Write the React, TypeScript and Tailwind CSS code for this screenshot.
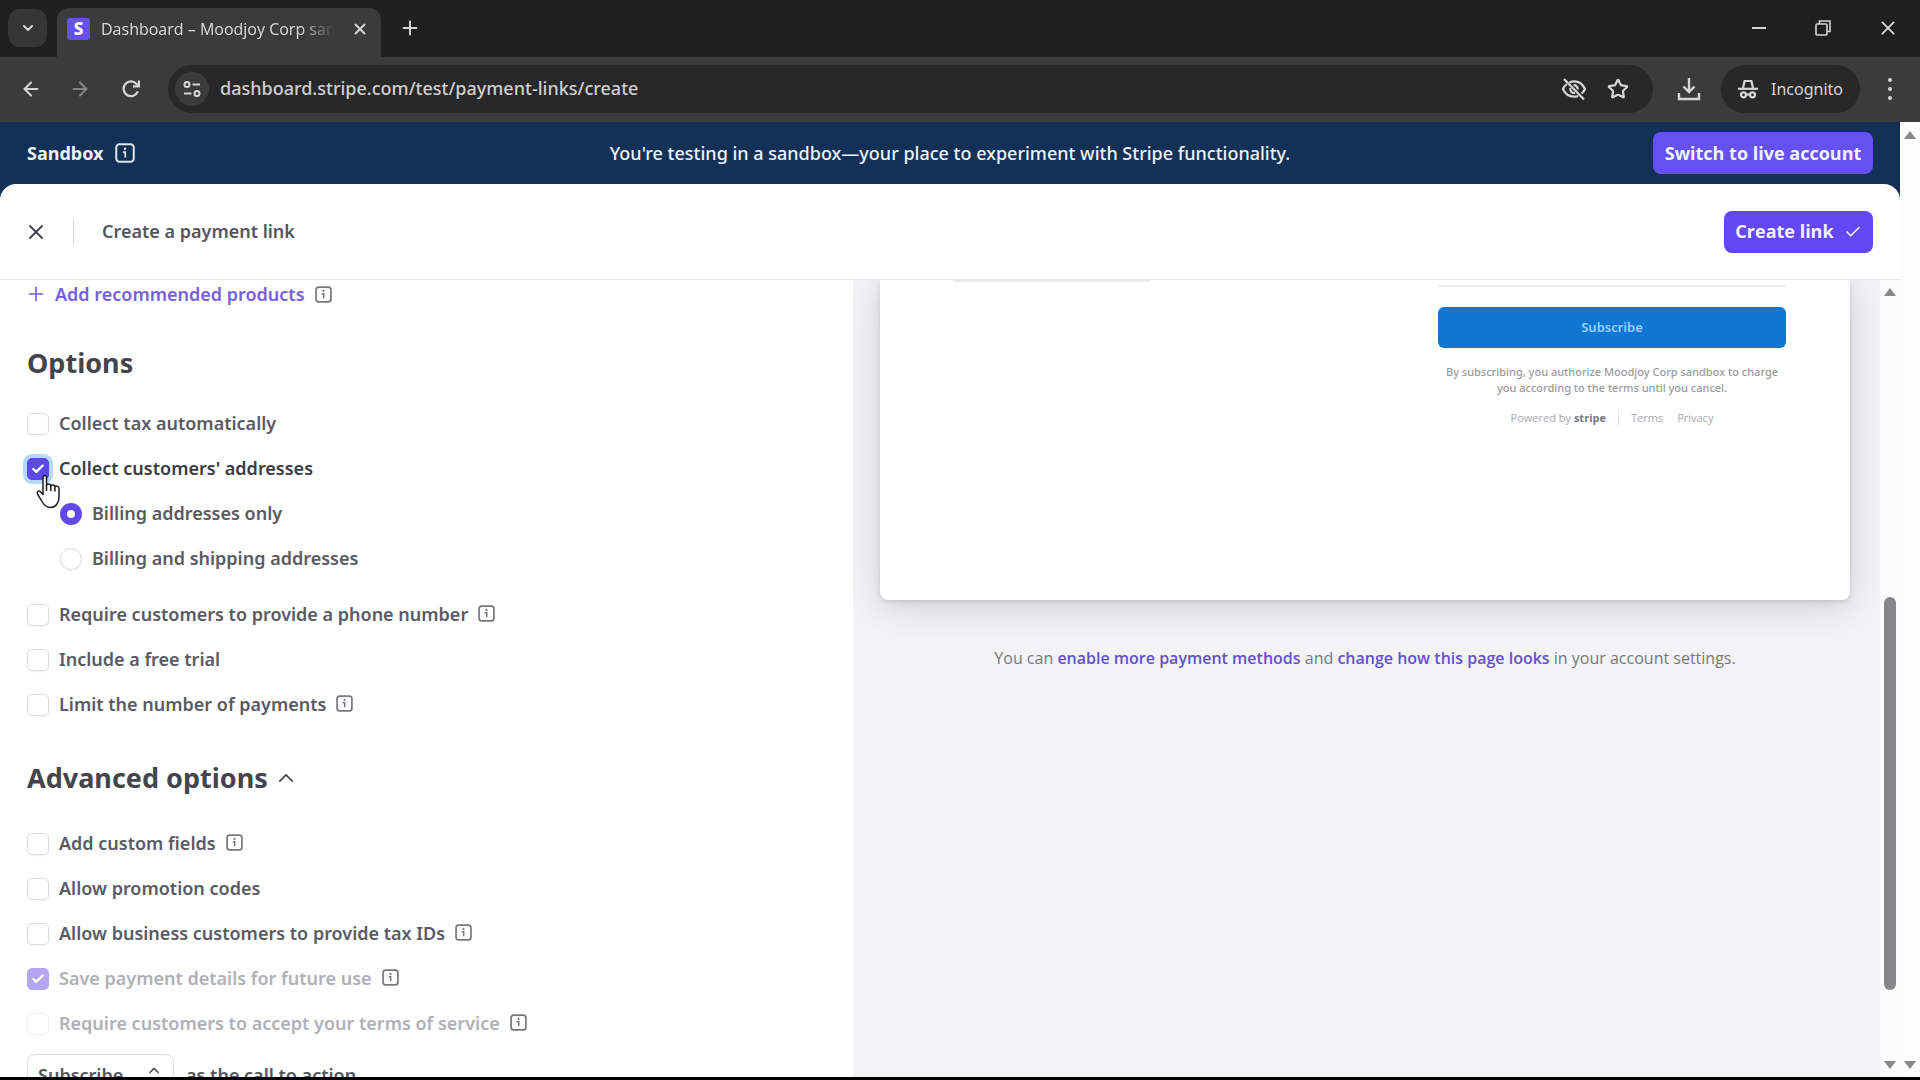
import React from 'react'
import {
  ArrowLeft,
  ArrowRight,
  Check,
  ChevronDown,
  ChevronUp,
  ChevronsUpDown,
  Plus,
  Star,
  X,
} from 'lucide-react'

type OptionProps = {
  id: string
  label: string
  info?: boolean
  checked?: boolean
  disabled?: boolean
  focused?: boolean
}

const InfoIcon: React.FC<{ className?: string }> = ({ className }) => (
  <svg
    viewBox="0 0 16 16"
    fill="none"
    stroke="currentColor"
    strokeWidth={1.6}
    className={className ?? 'size-[17px] text-[#77777d]'}
  >
    <rect x="1" y="1" width="14" height="14" rx="2.5" />
    <path d="M6.3 7.3h1.9v4.2" strokeWidth={1.4} />
    <circle cx="8" cy="4.6" r="1" fill="currentColor" stroke="none" />
  </svg>
)

const TuneIcon = () => (
  <svg
    viewBox="0 0 20 20"
    fill="none"
    stroke="currentColor"
    strokeWidth={2}
    className="size-5"
  >
    <circle cx="5" cy="5.5" r="2.5" />
    <path d="M10.5 5.5H18M2 14.5h7.5" />
    <circle cx="15" cy="14.5" r="2.5" />
  </svg>
)

const ReloadIcon = () => (
  <svg
    viewBox="0 0 20 20"
    fill="none"
    stroke="currentColor"
    strokeWidth={2}
    className="size-[22px]"
  >
    <path d="M16.2 12.2A6.7 6.7 0 1 1 14.8 5.2L17 7.4" />
    <path d="M17.2 2.2v5.4h-5.4" />
  </svg>
)

const EyeOffIcon = () => (
  <svg
    viewBox="0 0 26 24"
    fill="none"
    stroke="currentColor"
    strokeWidth={2.2}
    className="h-6 w-[26px]"
  >
    <path d="M8.5 5.4C9.9 4.7 11.4 4.3 13 4.3c5 0 9 3.2 11 7.7-.8 1.8-1.9 3.3-3.3 4.5M17 18.9c-1.2.5-2.6.8-4 .8-5 0-9-3.2-11-7.700.9-2 2.200-3.700 3.800-5" />
    <path d="M12.5 8.2a4 4 0 0 1 4.3 4.3M9.3 11a4 4 0 0 0 4.7 4.900" />
    <path d="M3 2l20 20.500" />
  </svg>
)

const DownloadIcon = () => (
  <svg
    viewBox="0 0 24 24"
    fill="none"
    stroke="currentColor"
    strokeWidth={2.4}
    className="size-6"
  >
    <path d="M12 1v14M6.5 9.5 12 15l5.5-5.5M2 16v6h20v-6" />
  </svg>
)

const IncognitoIcon = () => (
  <svg
    viewBox="0 0 22 20"
    fill="none"
    stroke="currentColor"
    strokeWidth={2.2}
    className="h-5 w-[22px]"
  >
    <path d="M6 9 7.600 2h6.800L16 9" />
    <path d="M1 9.800h20" />
    <circle cx="6.500" cy="15.800" r="2.500" />
    <circle cx="15.500" cy="15.800" r="2.500" />
    <path d="M9 15.500h4" />
  </svg>
)

const RestoreIcon = () => (
  <svg
    viewBox="0 0 16 16"
    fill="none"
    stroke="currentColor"
    strokeWidth={1.6}
    className="size-4"
  >
    <rect x="1" y="4" width="11" height="11" rx="1" />
    <path d="M4.5 4V1H15v10.5h-3" />
  </svg>
)

const HandCursor = () => (
  <svg
    viewBox="0 0 28 36"
    fill="white"
    stroke="#1b1b1f"
    strokeWidth={1.5}
    strokeLinejoin="round"
    className="pointer-events-none absolute top-7 left-2 z-10 h-9 w-7"
  >
    <path d="M8 3.500C8 .9 11.500 .9 11.500 3.500V11c.4-1.400 4.100-1.300 4.300.7.600-1.300 4-1 4.100 1 .7-1.200 4.100-.8 4.100 1.300v9c0 6-3.400 10.500-8.500 10.500-4.500 0-6.500-2.500-8.500-6l-4.500-7.500c-1.200-2 1.300-3.900 3-2.300L8 20.500V3.500Z" />
    <path d="M11.500 11v6M15.800 11.700V17M19.900 12.700V17.500" fill="none" />
  </svg>
)

const Arrow: React.FC<{ down?: boolean }> = ({ down }) => (
  <svg viewBox="0 0 12 8" fill="#87878a" className="h-2 w-3">
    <path d={down ? 'M0 0h12L6 8Z' : 'M6 0l6 8H0Z'} />
  </svg>
)

const CheckOption: React.FC<OptionProps> = ({
  id,
  label,
  info,
  checked,
  disabled,
  focused,
}) => {
  const tone = disabled
    ? 'text-[#b0b0b8]'
    : focused
      ? 'text-[#3b3b43]'
      : 'text-[#5a5a63]'

  return (
    <li className="relative flex h-[45px] items-center">
      <span className="grid size-[22px] shrink-0 place-items-center">
        <input
          id={id}
          type="checkbox"
          defaultChecked={checked}
          disabled={disabled}
          className={`col-start-1 row-start-1 size-[22px] appearance-none rounded-[5px] border border-[#dcdce2] bg-white shadow-xs checked:border-[#5f48e8] checked:bg-[#5f48e8] disabled:border-[#f0f0f3] disabled:shadow-none disabled:checked:border-[#b3a5f3] disabled:checked:bg-[#b3a5f3] ${focused ? 'ring-4 ring-[#b4dafb]' : ''}`}
        />
        {checked && (
          <Check
            strokeWidth={4}
            className="pointer-events-none col-start-1 row-start-1 size-[14px] text-white"
          />
        )}
      </span>
      <label htmlFor={id} className={`ml-[10px] font-semibold ${tone}`}>
        {label}
      </label>
      {info && (
        <button type="button" aria-label={`About: ${label}`} className="ml-[10px] pb-[2px]">
          <InfoIcon />
        </button>
      )}
      {focused && <HandCursor />}
    </li>
  )
}

const RadioOption: React.FC<{ id: string; label: string; checked?: boolean }> = ({
  id,
  label,
  checked,
}) => (
  <li className="flex h-[45px] items-center pl-[33px]">
    <input
      id={id}
      type="radio"
      name="address"
      defaultChecked={checked}
      className="size-[22px] appearance-none rounded-full border border-[#dcdce2] bg-white shadow-xs checked:border-[7px] checked:border-[#6247ea]"
    />
    <label htmlFor={id} className="ml-[10px] font-semibold text-[#5a5a63]">
      {label}
    </label>
  </li>
)

const TabStrip = () => (
  <div className="flex h-[57px] items-end justify-between bg-[#202020]">
    <div className="flex items-end">
      <button
        type="button"
        aria-label="Search tabs"
        className="mb-[10px] ml-2 grid h-[38px] w-[39px] place-items-center rounded-xl bg-[#363636]"
      >
        <ChevronDown className="size-4" strokeWidth={3} />
      </button>
      <div className="ml-[10px] flex h-[49px] w-[324px] items-center rounded-t-xl bg-[#3b3b3b] pr-3 pb-2 pl-[10px]">
        <span className="grid h-[22px] w-[23px] shrink-0 place-items-center rounded-[3px] bg-[#6651f0] text-[17px] leading-none font-extrabold text-white">
          S
        </span>
        <span className="ml-[11px] min-w-0 flex-1 overflow-hidden mask-r-from-85% font-['Open_Sans',sans-serif] text-[16px] whitespace-nowrap text-[#dcdcdc]">
          Dashboard – Moodjoy Corp sandbox
        </span>
        <button type="button" aria-label="Close tab" className="ml-4">
          <X className="size-[18px]" strokeWidth={2.5} />
        </button>
      </div>
      <button type="button" aria-label="New tab" className="mb-[18px] ml-[18px]">
        <Plus className="size-[22px]" strokeWidth={2.2} />
      </button>
    </div>
    <div className="mb-5 flex items-center gap-12 pr-[23px]">
      <button type="button" aria-label="Minimize" className="grid h-4 w-4 place-items-center">
        <span className="h-[2px] w-[14px] bg-current" />
      </button>
      <button type="button" aria-label="Restore">
        <RestoreIcon />
      </button>
      <button type="button" aria-label="Close">
        <X className="size-[18px] scale-125" strokeWidth={2} />
      </button>
    </div>
  </div>
)

const Toolbar = () => (
  <div className="flex h-[65px] items-center bg-[#3b3b3b] pr-5 pb-[2px] pl-5">
    <button type="button" aria-label="Back">
      <ArrowLeft className="size-[22px]" strokeWidth={2.2} />
    </button>
    <button type="button" aria-label="Forward" className="ml-[27px] text-[#858585]">
      <ArrowRight className="size-[22px]" strokeWidth={2.2} />
    </button>
    <button type="button" aria-label="Reload" className="ml-[29px]">
      <ReloadIcon />
    </button>
    <div className="ml-[26px] flex h-12 flex-1 items-center rounded-full bg-[#282828] pr-6 pl-[7px]">
      <button
        type="button"
        aria-label="Site information"
        className="grid size-[34px] place-items-center rounded-full bg-[#3b3b3b]"
      >
        <TuneIcon />
      </button>
      <input
        aria-label="Address"
        defaultValue="dashboard.stripe.com/test/payment-links/create"
        className="ml-[11px] min-w-0 flex-1 bg-transparent text-[18px] font-medium text-[#d0d0d0] outline-none"
      />
      <button type="button" aria-label="Third-party cookies blocked">
        <EyeOffIcon />
      </button>
      <button type="button" aria-label="Bookmark" className="ml-5">
        <Star className="size-[22px]" strokeWidth={2.4} />
      </button>
    </div>
    <button type="button" aria-label="Downloads" className="ml-6">
      <DownloadIcon />
    </button>
    <button
      type="button"
      className="ml-5 flex h-12 w-[139px] items-center gap-3 rounded-full bg-[#282828] pl-4 text-[16px]"
    >
      <IncognitoIcon />
      Incognito
    </button>
    <button type="button" aria-label="Menu" className="ml-5 grid w-5 justify-items-center gap-[5px]">
      <span className="size-1 rounded-full bg-current" />
      <span className="size-1 rounded-full bg-current" />
      <span className="size-1 rounded-full bg-current" />
    </button>
  </div>
)

const SandboxBanner = () => (
  <div className="grid h-[62px] shrink-0 grid-cols-[1fr_auto_1fr] items-center bg-[#133157] px-[27px] text-[18px] text-[#eef3fa]">
    <div className="flex items-center gap-3 font-bold">
      Sandbox
      <InfoIcon className="size-5 text-[#dbe6f2]" />
    </div>
    <p className="font-medium">
      You're testing in a sandbox—your place to experiment with Stripe functionality.
    </p>
    <button
      type="button"
      className="h-[42px] w-[220px] justify-self-end rounded-lg bg-[#6750f2] font-['Open_Sans',sans-serif] font-bold whitespace-nowrap"
    >
      Switch to live account
    </button>
  </div>
)

const PanelHeader = () => (
  <header className="flex h-24 shrink-0 items-center border-b border-[#e6e6ea] pr-[27px] pl-6">
    <button type="button" aria-label="Close" className="text-[#3f3f46]">
      <X className="size-6" strokeWidth={1.8} />
    </button>
    <span className="ml-[25px] h-6 w-px bg-[#d5d5db]" />
    <h1 className="ml-7 flex-1 text-[18px] font-semibold text-[#55555e]">
      Create a payment link
    </h1>
    <button
      type="button"
      className="flex h-[42px] w-[149px] items-center justify-center gap-[10px] rounded-lg bg-[#6447f4] font-['Open_Sans',sans-serif] text-[18px] font-bold text-[#f3f1ff]"
    >
      Create link
      <Check className="size-[18px]" strokeWidth={2.2} />
    </button>
  </header>
)

const Settings = () => (
  <section className="min-h-0 w-[853px] shrink-0 overflow-hidden pl-[27px] text-[18px]">
    <div className="flex h-7 items-center">
      <button type="button" className="flex items-center gap-[10px] font-semibold text-[#7760dc]">
        <Plus className="size-[18px] scale-125" strokeWidth={1.8} />
        Add recommended products
      </button>
      <button type="button" aria-label="About recommended products" className="ml-[10px]">
        <InfoIcon />
      </button>
    </div>

    <h2 className="mt-[39px] text-[27px] leading-8 font-bold text-[#44444c]">Options</h2>
    <ul className="mt-[22px]">
      <CheckOption id="tax" label="Collect tax automatically" />
      <CheckOption id="addresses" label="Collect customers' addresses" checked focused />
      <RadioOption id="billing" label="Billing addresses only" checked />
      <RadioOption id="shipping" label="Billing and shipping addresses" />
    </ul>
    <ul className="mt-[11px]">
      <CheckOption id="phone" label="Require customers to provide a phone number" info />
      <CheckOption id="trial" label="Include a free trial" />
      <CheckOption id="limit" label="Limit the number of payments" info />
    </ul>

    <h2 className="mt-[35px] text-[27px] leading-8 font-bold text-[#44444c]">
      <button type="button" className="flex items-center gap-2">
        Advanced options
        <ChevronUp className="size-5 scale-125" strokeWidth={1.6} />
      </button>
    </h2>
    <ul className="mt-[27px]">
      <CheckOption id="fields" label="Add custom fields" info />
      <CheckOption id="promo" label="Allow promotion codes" />
      <CheckOption id="taxids" label="Allow business customers to provide tax IDs" info />
      <CheckOption id="save" label="Save payment details for future use" info checked disabled />
      <CheckOption
        id="terms"
        label="Require customers to accept your terms of service"
        info
        disabled
      />
    </ul>

    <div className="mt-2 flex items-center gap-3 font-semibold text-[#55555e]">
      <span className="grid items-center">
        <select
          id="cta"
          className="col-start-1 row-start-1 h-[42px] w-[147px] appearance-none rounded-lg border border-[#dcdce2] bg-white pl-[10px]"
        >
          <option>Subscribe</option>
        </select>
        <ChevronsUpDown className="pointer-events-none col-start-1 row-start-1 mr-[10px] size-5 justify-self-end" />
      </span>
      <label htmlFor="cta">as the call to action</label>
    </div>
  </section>
)

const Preview = () => (
  <section className="min-w-0 flex-1 overflow-hidden bg-[#f4f4f7] pr-[30px] pl-[27px]">
    <div className="grid h-80 grid-cols-2 rounded-b-lg bg-white shadow-[0_6px_36px_rgba(60,60,90,0.22),0_2px_5px_rgba(60,60,90,0.16)]">
      <div className="pl-[73px]">
        <div className="h-[2px] w-[197px] bg-[#ececef]" />
      </div>
      <div className="pr-16 pl-[73px] text-center">
        <div className="h-[7px] border-b-2 border-[#ebedef]" />
        <button
          type="button"
          className="mt-5 h-[41px] w-full rounded-md bg-[#0f76d1] text-[13px] font-semibold text-[#9fd0f6]"
        >
          Subscribe
        </button>
        <p className="mt-4 px-1 text-[11px] leading-4 font-medium text-[#9a9a9e]">
          By subscribing, you authorize Moodjoy Corp sandbox to charge you according to the
          terms until you cancel.
        </p>
        <div className="mt-[14px] flex items-center justify-center font-['Open_Sans',sans-serif] text-[11px] leading-4 text-[#a8a8ad]">
          <span>
            Powered by <b className="text-[#77777c]">stripe</b>
          </span>
          <span className="mx-3 h-4 w-px bg-[#e4e4e8]" />
          <a href="#terms">Terms</a>
          <a href="#privacy" className="ml-[14px]">
            Privacy
          </a>
        </div>
      </div>
    </div>
    <p className="mt-[46px] text-center font-['Open_Sans',sans-serif] text-[16px] leading-6 text-[#77777f]">
      You can{' '}
      <a href="#methods" className="font-semibold text-[#6450cf]">
        enable more payment methods
      </a>{' '}
      and{' '}
      <a href="#branding" className="font-semibold text-[#6450cf]">
        change how this page looks
      </a>{' '}
      in your account settings.
    </p>
  </section>
)

const App = () => (
  <div className="flex h-screen flex-col overflow-hidden border-b-[3px] border-black bg-white font-['Noto_Sans','Open_Sans',sans-serif]">
    <div className="shrink-0 text-[#d6d6d6]">
      <TabStrip />
      <Toolbar />
    </div>
    <div className="flex min-h-0 flex-1">
      <div className="flex min-w-0 flex-1 flex-col bg-[#133157]">
        <SandboxBanner />
        <main className="flex min-h-0 flex-1 flex-col overflow-hidden rounded-t-2xl bg-white">
          <PanelHeader />
          <div className="flex min-h-0 flex-1">
            <Settings />
            <Preview />
            <div className="flex w-5 flex-col items-center bg-[#fbfbfc] py-2">
              <Arrow />
              <div className="grow-[300]" />
              <div className="w-3 grow-[392] rounded-full bg-[#87878a]" />
              <div className="grow-[71]" />
              <Arrow down />
            </div>
          </div>
        </main>
      </div>
      <div className="flex w-5 flex-col items-center justify-between bg-[#fcfcfc] pt-[9px] pb-2">
        <Arrow />
        <Arrow down />
      </div>
    </div>
  </div>
)

export default App
